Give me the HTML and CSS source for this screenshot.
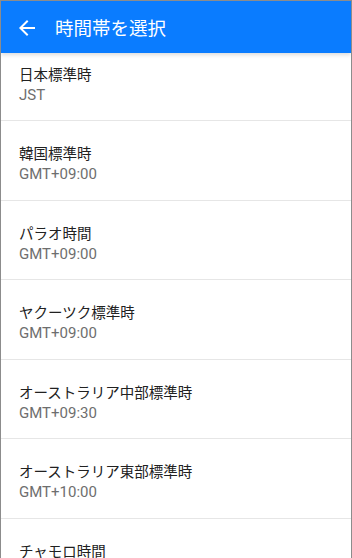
FILE: index.html
```html
<!DOCTYPE html>
<html lang="ja">
  <head>
    <meta charset="UTF-8" />
    <meta name="viewport" content="width=device-width, initial-scale=1.0" />
    <title>時間帯を選択</title>
    <link rel="stylesheet" href="styles.css">
  </head>
  <body>
    <div class="screen">
      <div class="app-bar">
        <svg class="back-icon" viewBox="0 0 24 24" width="24" height="24">
          <path d="M20 11H7.83l5.59-5.59L12 4l-8 8 8 8 1.41-1.41L7.83 13H20v-2z" fill="#fff" />
        </svg>
        <h1 class="app-title">時間帯を選択</h1>
      </div>

      <ul class="zone-list">
        <li class="zone-item">
          <div class="zone-name">日本標準時</div>
          <div class="zone-offset">JST</div>
        </li>
        <li class="zone-item">
          <div class="zone-name">韓国標準時</div>
          <div class="zone-offset">GMT+09:00</div>
        </li>
        <li class="zone-item">
          <div class="zone-name">パラオ時間</div>
          <div class="zone-offset">GMT+09:00</div>
        </li>
        <li class="zone-item">
          <div class="zone-name">ヤクーツク標準時</div>
          <div class="zone-offset">GMT+09:00</div>
        </li>
        <li class="zone-item">
          <div class="zone-name">オーストラリア中部標準時</div>
          <div class="zone-offset">GMT+09:30</div>
        </li>
        <li class="zone-item">
          <div class="zone-name">オーストラリア東部標準時</div>
          <div class="zone-offset">GMT+10:00</div>
        </li>
        <li class="zone-item">
          <div class="zone-name">チャモロ時間</div>
          <div class="zone-offset">GMT+10:00</div>
        </li>
      </ul>
    </div>
  </body>
</html>
```

FILE: styles.css
```css
html,
body {
  margin: 0;
  padding: 0;
  background-color: #fff;
}

body {
  font-family: Roboto, "Noto Sans CJK JP", sans-serif;
}

.screen {
  width: 352px;
  height: 558px;
  box-sizing: border-box;
  border: 1px solid #8c8c8c;
  border-bottom: none;
  overflow: hidden;
  display: flex;
  flex-direction: column;
}

.app-bar {
  position: relative;
  z-index: 1;
  flex: none;
  height: 52px;
  background-color: #0a7cff;
  display: flex;
  align-items: center;
  padding-left: 14px;
  box-shadow: 0 2px 4px rgba(0, 0, 0, 0.14);
}

.back-icon {
  flex: none;
  margin-top: 2px;
}

.app-title {
  margin: 0 0 0 16px;
  color: #fff;
  font-size: 18.5px;
  font-weight: normal;
  font-family: "Noto Sans CJK JP", sans-serif;
  line-height: 24px;
}

.zone-list {
  list-style: none;
  margin: -11.5px 0 0 0;
  padding: 0;
}

.zone-item {
  height: 78.5px;
  border-bottom: 1px solid #e6e6e6;
  padding-left: 18px;
}

.zone-name {
  padding-top: 22px;
  font-family: "Noto Sans CJK JP", sans-serif;
  font-size: 14.5px;
  line-height: 20px;
  color: #212121;
}

.zone-offset {
  margin-top: 1px;
  font-size: 15px;
  line-height: 20px;
  color: #6e6e6e;
}
```
